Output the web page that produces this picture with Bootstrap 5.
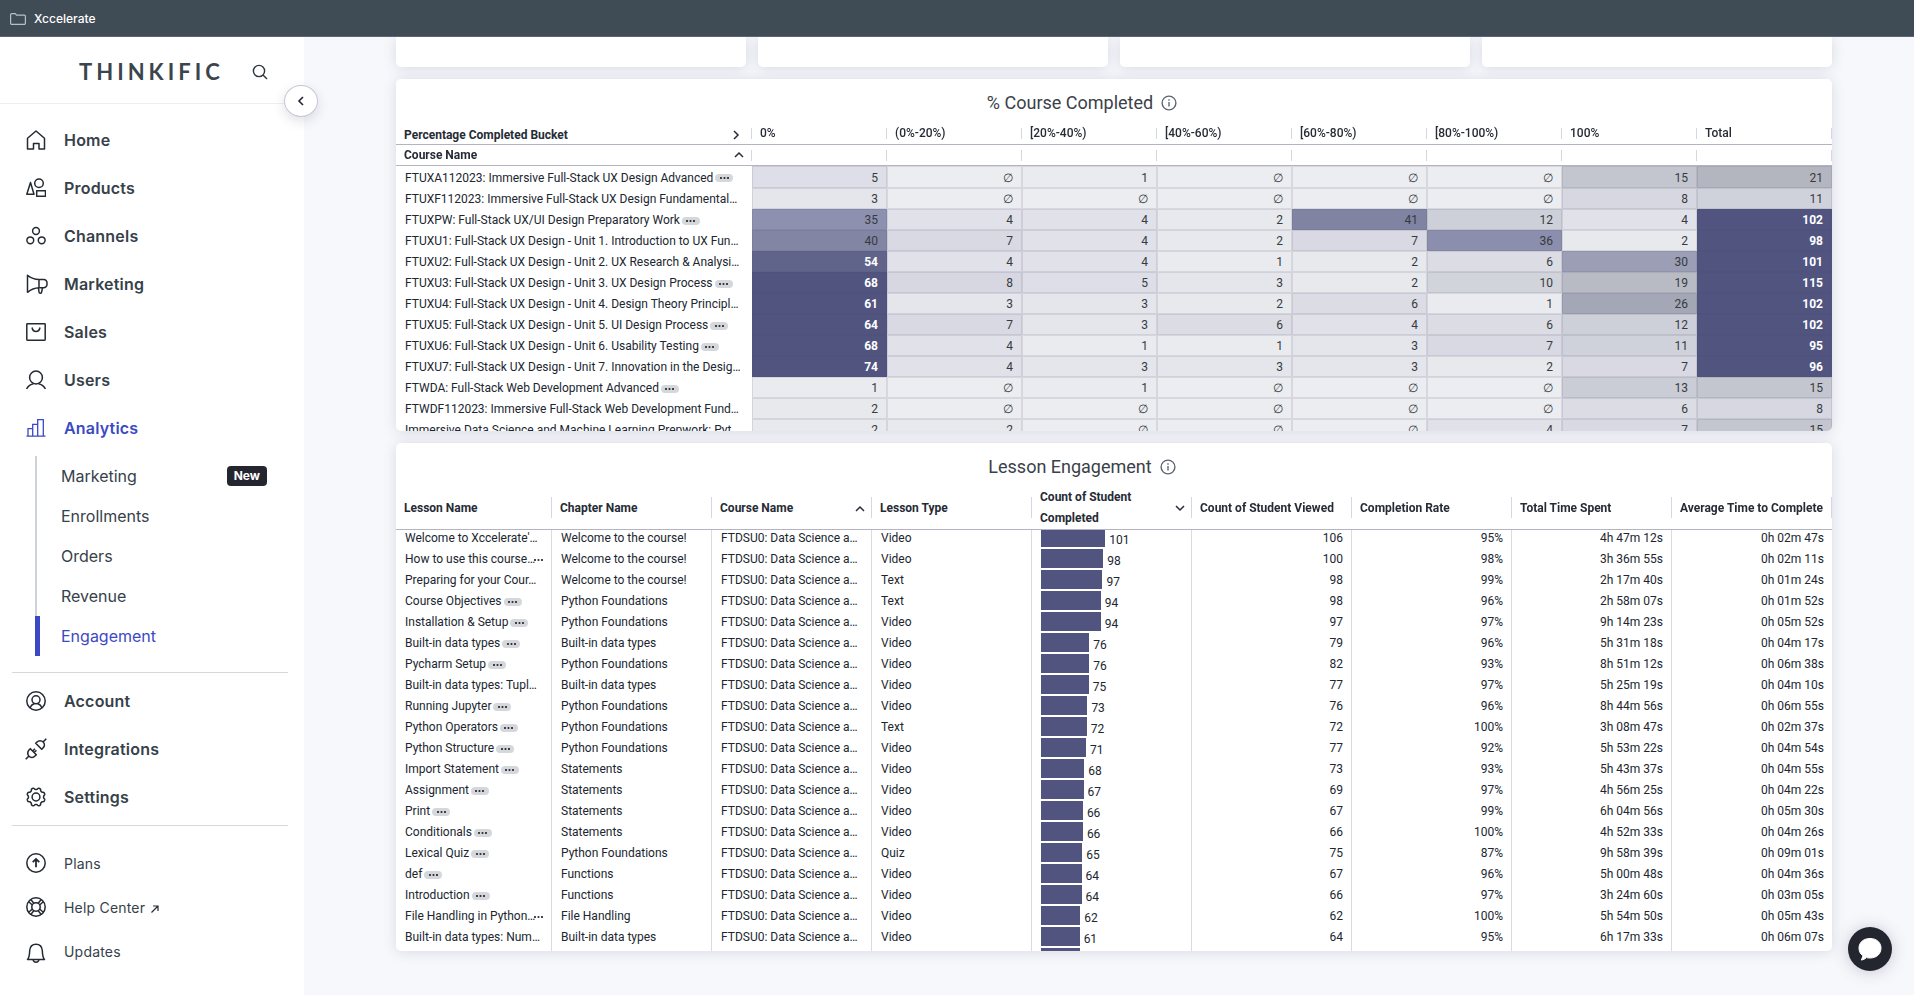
<!DOCTYPE html>
<html lang="en">
<head>
<meta charset="utf-8">
<meta name="viewport" content="width=device-width, initial-scale=1">
<title>Engagement analytics</title>
<link href="https://cdn.jsdelivr.net/npm/bootstrap@5.3.0/dist/css/bootstrap.min.css" rel="stylesheet">
<style>
  body { font-family: Inter, "Liberation Sans", sans-serif; background: #f7f8fb; color: #36414a; height: 100vh; overflow: hidden; }
  a { color: inherit; text-decoration: none; }
  svg { display: block; fill: none; stroke: currentColor; flex: none; }

  .bookmarks { height: 37px; background: #404c55; border-bottom: 1px solid #5c6670; color: #fff; font: 500 12px/16px Inter, sans-serif; padding: 1px 10px 0; gap: 8px; }
  .bookmarks svg { color: #b9bfc4; }

  .side { width: 304px; background: #fff; position: relative; flex: none; }
  .brand-row { height: 67px; border-bottom: 1px solid #eeeff2; padding: 4px 36px 0 79px; }
  .brand-name { font: 700 22px/24px Lato, sans-serif; letter-spacing: 4px; color: #3b454d; }
  .icon-btn { border: 0; background: none; padding: 0; color: #2b343c; }
  .collapse-btn { position: absolute; right: -14px; top: 48px; width: 34px; height: 32px; border-radius: 50%; border: 1px solid #c6c6d4; background: #fff; color: #1f2430; box-shadow: 0 4px 12px rgba(60,64,110,.16); z-index: 2; }
  .main-menu { padding-top: 12px; }
  .menu-link { height: 48px; padding-left: 26px; gap: 18px; font-weight: 600; font-size: 16px; letter-spacing: .2px; }
  .menu-link svg { color: #242a33; }
  .menu-link.current, .menu-link.current svg { color: #3c49c4; }
  .sub-menu { margin: 4px 37px 16px 35px; }
  .sub-link { height: 40px; padding-left: 24px; border-left: 2px solid #cdd2d6; font-size: 16px; }
  .sub-link.current { color: #3c49c4; border-left: 5px solid #3c49c4; padding-left: 21px; }
  .new-tag { background: #23262f; color: #fff; font: 700 12px/20px Inter, sans-serif; padding: 0 7px; border-radius: 4px; }
  .rule { height: 1px; background: #d6d9dc; margin: 0 16px 4px 12px; }
  .foot-menu { padding-top: 11px; }
  .foot-link { height: 44px; padding-left: 26px; gap: 18px; font-size: 14px; letter-spacing: .2px; }
  .foot-link svg { color: #242a33; }
  .out-arrow { margin: 4px 0 0 6px; }

  .board { padding: 0 82px 0 92px; font-family: Roboto, sans-serif; min-width: 0; gap: 12px; }
  .stat-row { gap: 12px; }
  .tile { background: #fff; border-radius: 5px; box-shadow: 0 1px 13px rgba(70,72,120,.17); overflow: hidden; }
  .stat { height: 30px; border-radius: 0 0 5px 5px; }
  .completed { height: 352px; }
  .lessons { height: 508px; }
  .tile-title { height: 43px; padding: 5px 64px 0 0; gap: 8px; font-size: 18px; line-height: 24px; font-weight: 400; color: #3a4149; margin: 0; }
  .tile-title svg { color: #5c6370; }
  .pane { overflow: auto; scrollbar-width: none; flex: 1; min-height: 0; }
  .pane::-webkit-scrollbar { display: none; }

  .grid { width: 100%; table-layout: fixed; border-collapse: separate; border-spacing: 0; font-size: 12px; line-height: 21px; color: #20262f; }
  .grid th { font-weight: 500; color: #262b36; padding: 0; white-space: nowrap; }
  .grid thead { position: sticky; top: 0; z-index: 1; background: #fff; }
  .grid thead th { border-bottom: 1px solid #b3b3c2; }
  .grid td { padding: 2px 9px 0; height: 21px; line-height: 19px; white-space: nowrap; overflow: hidden; }
  .head-cell { display: flex; align-items: center; justify-content: space-between; padding: 0 8px; border-right: 1px solid #d6d6e2; }
  .strong-head { font-weight: 700; }

  .heat th:first-child, .heat td:first-child { width: 356px; }
  .heat .row-a th { height: 23px; }
  .heat .row-b th { height: 21px; }
  .heat .head-cell { height: 11px; }
  .heat .row-a th:first-child .head-cell { padding: 4px 11px 0 8px; }
  .heat .row-b th:first-child .head-cell { padding: 0 7px 0 8px; }
  .heat td + td { text-align: right; border: 1px solid rgba(75,75,105,.13); padding: 2px 8px 0; line-height: 17px; color: #353b41; }
  .heat tbody tr:first-child td { height: 22px; }
  .heat td.hot { color: #fff; font-weight: 700; }

  .log th:first-child { width: 156px; }
  .log thead th { height: 44px; }
  .log .head-cell { height: 21px; padding: 2px 6px 0 8px; }
  .log .head-cell.two-line { padding-top: 0; }
  .log td { border-right: 1px solid #dadbe0; }
  .log td:last-child { border-right: 0; padding-right: 8px; }
  .log td.num { text-align: right; padding-right: 8px; }
  .log td.meter { padding: 0 9px; }
  .meter-row { display: flex; gap: 4px; height: 21px; padding: 1px 0; }
  .meter-fill { background: #50547f; }
  .meter-row span { line-height: 25px; height: 19px; }

  .more { display: inline-flex; align-items: center; justify-content: center; width: 18px; height: 8px; border-radius: 4px; background: #d6d7db; margin-left: 2px; vertical-align: middle; }
  .more.bare { background: none; width: 10px; margin-left: -2px; }

  .chat-btn { position: fixed; right: 22px; bottom: 24px; width: 44px; height: 44px; border: 0; border-radius: 50%; background: #23262f; color: #fff; box-shadow: 0 1px 16px rgba(60,64,110,.26); z-index: 3; }
</style>
</head>
<body class="d-flex flex-column">
<header class="bookmarks d-flex align-items-center flex-shrink-0">
  <svg width="16" height="12" viewBox="0 0 16 12" stroke-width="1.2"><path d="M.6 10V1.8A1.2 1.2 0 0 1 1.800.6H5.200L6.600 2.100H14.200A1.200 1.200 0 0 1 15.400 3.300V10A1.300 1.300 0 0 1 14.100 11.400H1.900A1.300 1.300 0 0 1 .6 10Z"/></svg>
  <a href="#">Xccelerate</a>
</header>

<div class="d-flex flex-grow-1 overflow-hidden">
  <nav class="side" aria-label="Main">
    <div class="brand-row d-flex align-items-center justify-content-between">
      <a href="#" class="brand-name">THINKIFIC</a>
      <button class="icon-btn" type="button" aria-label="Search"><svg width="16" height="16" viewBox="0 0 16 16" stroke-width="1.4"><circle cx="7" cy="7" r="5.600"/><path d="M11 11l4 4"/></svg></button>
    </div>
    <button class="collapse-btn d-flex align-items-center justify-content-center p-0" type="button" aria-label="Collapse menu"><svg width="8" height="10" viewBox="0 0 8 10" stroke-width="1.600"><path d="M6 1L2 5l4 4"/></svg></button>

    <div class="main-menu">
      <a class="menu-link d-flex align-items-center" href="#"><svg width="20" height="20" viewBox="0 0 20 20" stroke-width="1.500" stroke-linejoin="round"><path d="M1.500 8.200L10 1l8.500 7.200V19H13v-5.500H7.500V19h-6z"/></svg>Home</a>
      <a class="menu-link d-flex align-items-center" href="#"><svg width="20" height="20" viewBox="0 0 20 20" stroke-width="1.500" stroke-linejoin="round"><path d="M4.500 4.500L8 16.200H.800z"/><circle cx="13" cy="5.300" r="4.300"/><path d="M10.700 12.700h8.800v5.600h-8.800z"/></svg>Products</a>
      <a class="menu-link d-flex align-items-center" href="#"><svg width="20" height="20" viewBox="0 0 20 20" stroke-width="1.500"><circle cx="10" cy="5" r="3.400"/><circle cx="4.300" cy="14.300" r="3.400"/><circle cx="15.700" cy="14.300" r="3.400"/></svg>Channels</a>
      <a class="menu-link d-flex align-items-center" href="#"><svg class="overflow-visible" width="20" height="20" viewBox="0 0 20 20" stroke-width="1.500" stroke-linejoin="round"><path d="M1.500 1.300v17C5 15.500 8.500 14 13 13.800V5.500C8.500 5.300 5 4 1.500 1.300zM13 5.500h4.500a3.300 3.300 0 0 1 3.500 3.700v1a3.500 3.500 0 0 1-3.500 3.600H13M12.500 14l.5 4a1.300 1.300 0 0 0 2.600 0l1-4.300"/></svg>Marketing</a>
      <a class="menu-link d-flex align-items-center" href="#"><svg width="20" height="20" viewBox="0 0 20 20" stroke-width="1.500" stroke-linejoin="round"><rect x=".8" y="1.800" width="18.400" height="16.400" rx=".6"/><path d="M6 5.500c.5 2.600 2 4 4 4s3.500-1.400 4-4"/></svg>Sales</a>
      <a class="menu-link d-flex align-items-center" href="#"><svg width="20" height="20" viewBox="0 0 20 20" stroke-width="1.500"><circle cx="10" cy="7.500" r="6.400"/><path d="M.6 19c1.800-3.300 4.500-4.800 7-5.200M19.400 19c-1.800-3.300-4.500-4.800-7-5.200"/></svg>Users</a>
      <a class="menu-link current d-flex align-items-center" href="#"><svg width="20" height="20" viewBox="0 0 20 20" stroke-width="1.300"><path d="M.5 18.200h19M2 18v-7.300h4.700M6.700 18V6.300h5M11.700 18V1.700h5.600V18"/></svg>Analytics</a>
    </div>
    <div class="sub-menu d-flex flex-column">
      <a class="sub-link d-flex align-items-center justify-content-between" href="#">Marketing <span class="new-tag">New</span></a>
      <a class="sub-link d-flex align-items-center" href="#">Enrollments</a>
      <a class="sub-link d-flex align-items-center" href="#">Orders</a>
      <a class="sub-link d-flex align-items-center" href="#">Revenue</a>
      <a class="sub-link current d-flex align-items-center" href="#">Engagement</a>
    </div>
    <div class="rule"></div>
    <a class="menu-link d-flex align-items-center" href="#"><svg width="20" height="20" viewBox="0 0 20 20" stroke-width="1.500"><circle cx="10" cy="10" r="9.200"/><circle cx="10" cy="8.800" r="4"/><path d="M4 16.800c1-2.500 2.800-3.700 4.500-4.300M16 16.800c-1-2.500-2.800-3.700-4.500-4.300"/></svg>Account</a>
    <a class="menu-link d-flex align-items-center" href="#"><svg class="overflow-visible" width="20" height="20" viewBox="0 0 20 20" stroke-width="1.600" stroke-linejoin="round"><path d="M-.3 20.300l3-3M17.300 2.700l3-3M4.300 9.700l6 6-1.300 1.300c-1.700 1.700-4.300 1.900-6 .2s-1.700-4.500 0-6.200zM9.700 4.300l6 6L17 9c1.700-1.700 1.900-4.300.2-6s-4.500-1.700-6.200 0zM6.700 12l2.200-2.200M8.200 13.500l2.200-2.200"/></svg>Integrations</a>
    <a class="menu-link d-flex align-items-center" href="#"><svg width="20" height="20" viewBox="0 0 20 20" stroke-width="1.500" stroke-linejoin="round"><circle cx="10" cy="10" r="3.900"/><path id="gear"/></svg>Settings</a>
    <div class="rule mt-1"></div>
    <div class="foot-menu">
      <a class="foot-link d-flex align-items-center" href="#"><svg width="20" height="20" viewBox="0 0 20 20" stroke-width="1.500"><circle cx="10" cy="10" r="9.200"/><path d="M10 14.200V6M6.700 9.200L10 6l3.300 3.200" stroke-width="1.800"/></svg>Plans</a>
      <a class="foot-link d-flex align-items-center" href="#"><svg width="20" height="20" viewBox="0 0 20 20" stroke-width="1.500"><circle cx="10" cy="10" r="9.200"/><circle cx="10" cy="10" r="4.200"/><path d="M4.800 2.500L8 6.400M2.700 4.800L6.400 8M15.200 2.500L12 6.400M17.300 4.800L13.600 8M4.800 17.500L8 13.600M2.700 15.200L6.400 12M15.200 17.500L12 13.600M17.300 15.200L13.600 12"/></svg><span class="d-flex align-items-center">Help Center<svg class="out-arrow" width="8" height="8" viewBox="0 0 8 8" stroke-width="1.200"><path d="M.5 7.500L7 1M2 1h5v5"/></svg></span></a>
      <a class="foot-link d-flex align-items-center" href="#"><svg class="mt-1" width="20" height="20" viewBox="0 0 20 20" stroke-width="1.500" stroke-linejoin="round"><path d="M1.500 16.500C3.500 14.500 3.500 11 3.700 7.500 4 3.500 6.500 1.200 10 1.200s6 2.300 6.300 6.300c.2 3.500.2 7 2.200 9zM7 16.700c.3 1.700 1.500 2.500 3 2.500s2.700-.8 3-2.500"/></svg>Updates</a>
    </div>
  </nav>

  <main class="board flex-grow-1 d-flex flex-column">
    <div class="stat-row d-flex flex-shrink-0">
      <div class="tile stat flex-fill"></div>
      <div class="tile stat flex-fill"></div>
      <div class="tile stat flex-fill"></div>
      <div class="tile stat flex-fill"></div>
    </div>

    <section class="tile completed d-flex flex-column flex-shrink-0">
      <h2 class="tile-title d-flex align-items-center justify-content-center flex-shrink-0"><span>% Course Completed</span><svg width="16" height="16" viewBox="0 0 16 16" stroke-width="1.400"><circle cx="8" cy="8" r="6.900"/><path d="M8 7v4.500M8 4.200v1.500"/></svg></h2>
      <div class="pane">
        <table class="grid heat">
          <thead>
            <tr class="row-a" id="buckets"><th scope="col"><div class="head-cell strong-head"><span>Percentage Completed Bucket</span><svg width="8" height="10" viewBox="0 0 8 10" stroke-width="1.500"><path d="M2 1l4 4-4 4"/></svg></div></th></tr>
            <tr class="row-b" id="names"><th scope="col"><div class="head-cell strong-head"><span>Course Name</span><svg width="10" height="8" viewBox="0 0 10 8" stroke-width="1.500"><path d="M1 6l4-4 4 4"/></svg></div></th></tr>
          </thead>
          <tbody id="heatBody"></tbody>
        </table>
      </div>
    </section>

    <section class="tile lessons d-flex flex-column flex-shrink-0">
      <h2 class="tile-title d-flex align-items-center justify-content-center flex-shrink-0"><span>Lesson Engagement</span><svg width="16" height="16" viewBox="0 0 16 16" stroke-width="1.400"><circle cx="8" cy="8" r="6.900"/><path d="M8 7v4.500M8 4.200v1.500"/></svg></h2>
      <div class="pane" id="lessonPane">
        <table class="grid log">
          <thead><tr>
            <th scope="col"><div class="head-cell strong-head">Lesson Name</div></th>
            <th scope="col"><div class="head-cell strong-head">Chapter Name</div></th>
            <th scope="col"><div class="head-cell strong-head"><span>Course Name</span><svg width="10" height="8" viewBox="0 0 10 8" stroke-width="1.500"><path d="M1 6l4-4 4 4"/></svg></div></th>
            <th scope="col"><div class="head-cell strong-head">Lesson Type</div></th>
            <th scope="col"><div class="head-cell two-line strong-head"><span>Count of Student<br>Completed</span><svg width="10" height="8" viewBox="0 0 10 8" stroke-width="1.500"><path d="M1 2l4 4 4-4"/></svg></div></th>
            <th scope="col"><div class="head-cell strong-head">Count of Student Viewed</div></th>
            <th scope="col"><div class="head-cell strong-head">Completion Rate</div></th>
            <th scope="col"><div class="head-cell strong-head">Total Time Spent</div></th>
            <th scope="col"><div class="head-cell strong-head">Average Time to Complete</div></th>
          </tr></thead>
          <tbody id="lessonBody"></tbody>
        </table>
      </div>
    </section>
  </main>
</div>

<button class="chat-btn d-flex align-items-center justify-content-center p-0" type="button" aria-label="Open chat"><svg width="24" height="24" viewBox="0 0 24 24" stroke="none"><path fill="#fff" d="M12 1.500c6.500 0 11 4 11 9.500 0 6-4.500 10-11 10-1.300 0-2.500-.1-3.500-.4C7 22 5 22.800 3.200 23c.9-1.300 1.500-2.800 1.500-4.400C2.200 16.800 1 14.300 1 11c0-5.500 4.500-9.500 11-9.500z"/></svg></button>

<script src="https://cdn.jsdelivr.net/npm/bootstrap@5.3.0/dist/js/bootstrap.bundle.min.js"></script>
<script>
  // Settings cog: an outline with eight rounded teeth
  const pts = [];
  for (let i = 0; i < 96; i++) {
    const t = i / 96 * 2 * Math.PI, r = 8.4 + .8 * Math.tanh(2.5 * Math.cos(8 * t + Math.PI));
    pts.push((10 + r * Math.cos(t)).toFixed(2) + ' ' + (10 + r * Math.sin(t)).toFixed(2));
  }
  document.getElementById('gear').setAttribute('d', 'M' + pts.join('L') + 'Z');

  const dots = '<svg width="9" height="2" viewBox="0 0 9 2" stroke="none"><g fill="#3a3f4a"><circle cx="1" cy="1" r=".7"/><circle cx="4.500" cy="1" r=".7"/><circle cx="8" cy="1" r=".7"/></g></svg>';
  // A trailing "+" gives the name a menu pill; "~" leaves only its dots
  const label = s => s.endsWith('+') ? s.slice(0, -1) + '<span class="more">' + dots + '</span>'
    : s.endsWith('~') ? s.slice(0, -1) + '<span class="more bare">' + dots + '</span>' : s;

  const buckets = ['0%', '(0%-20%)', '[20%-40%)', '[40%-60%)', '[60%-80%)', '[80%-100%)', '100%', 'Total'];
  buckets.forEach(b => {
    document.getElementById('buckets').insertAdjacentHTML('beforeend', `<th scope="col"><div class="head-cell">${b}</div></th>`);
    document.getElementById('names').insertAdjacentHTML('beforeend', '<th><div class="head-cell"></div></th>');
  });

  // Heat scale: value and colour stops, blended in between
  const stops = [[0,236,237,240],[2,232,233,237],[4,225,225,234],[7,217,217,227],[12,205,208,216],[15,195,198,207],[21,179,182,191],[26,164,167,181],[30,155,158,181],[35,141,144,174],[41,128,131,161],[54,96,100,138],[60,80,84,127],[999,80,84,127]];
  const heat = v => {
    let i = 1; while (v > stops[i][0]) i++;
    const a = stops[i - 1], b = stops[i], k = (v - a[0]) / (b[0] - a[0]);
    return 'rgb(' + [1, 2, 3].map(n => Math.round(a[n] + (b[n] - a[n]) * k)).join(',') + ')';
  };
  const courses = [
    ['FTUXA112023: Immersive Full-Stack UX Design Advanced+',5,0,1,0,0,0,15,21],
    ['FTUXF112023: Immersive Full-Stack UX Design Fundamental…',3,0,0,0,0,0,8,11],
    ['FTUXPW: Full-Stack UX/UI Design Preparatory Work+',35,4,4,2,41,12,4,102],
    ['FTUXU1: Full-Stack UX Design - Unit 1. Introduction to UX Fun…',40,7,4,2,7,36,2,98],
    ['FTUXU2: Full-Stack UX Design - Unit 2. UX Research &amp; Analysi…',54,4,4,1,2,6,30,101],
    ['FTUXU3: Full-Stack UX Design - Unit 3. UX Design Process+',68,8,5,3,2,10,19,115],
    ['FTUXU4: Full-Stack UX Design - Unit 4. Design Theory Principl…',61,3,3,2,6,1,26,102],
    ['FTUXU5: Full-Stack UX Design - Unit 5. UI Design Process+',64,7,3,6,4,6,12,102],
    ['FTUXU6: Full-Stack UX Design - Unit 6. Usability Testing+',68,4,1,1,3,7,11,95],
    ['FTUXU7: Full-Stack UX Design - Unit 7. Innovation in the Desig…',74,4,3,3,3,2,7,96],
    ['FTWDA: Full-Stack Web Development Advanced+',1,0,1,0,0,0,13,15],
    ['FTWDF112023: Immersive Full-Stack Web Development Fund…',2,0,0,0,0,0,6,8],
    ['Immersive Data Science and Machine Learning Prepwork: Pyt…',2,2,0,0,0,4,7,15]
  ];
  document.getElementById('heatBody').innerHTML = courses.map(([n, ...v]) =>
    `<tr><td>${label(n)}</td>${v.map(x => `<td class="${x > 50 ? 'hot' : ''}" style="background:${heat(x)}">${x || '∅'}</td>`).join('')}</tr>`).join('');

  const PF = 'Python Foundations', WC = 'Welcome to the course!', BT = 'Built-in data types', ST = 'Statements';
  const lessons = [
    ["Welcome to Xccelerate'…",WC,'Video',101,106,95,'4h 47m 12s','0h 02m 47s'],
    ['How to use this course…~',WC,'Video',98,100,98,'3h 36m 55s','0h 02m 11s'],
    ['Preparing for your Cour…',WC,'Text',97,98,99,'2h 17m 40s','0h 01m 24s'],
    ['Course Objectives+',PF,'Text',94,98,96,'2h 58m 07s','0h 01m 52s'],
    ['Installation &amp; Setup+',PF,'Video',94,97,97,'9h 14m 23s','0h 05m 52s'],
    ['Built-in data types+',BT,'Video',76,79,96,'5h 31m 18s','0h 04m 17s'],
    ['Pycharm Setup+',PF,'Video',76,82,93,'8h 51m 12s','0h 06m 38s'],
    ['Built-in data types: Tupl…',BT,'Video',75,77,97,'5h 25m 19s','0h 04m 10s'],
    ['Running Jupyter+',PF,'Video',73,76,96,'8h 44m 56s','0h 06m 55s'],
    ['Python Operators+',PF,'Text',72,72,100,'3h 08m 47s','0h 02m 37s'],
    ['Python Structure+',PF,'Video',71,77,92,'5h 53m 22s','0h 04m 54s'],
    ['Import Statement+',ST,'Video',68,73,93,'5h 43m 37s','0h 04m 55s'],
    ['Assignment+',ST,'Video',67,69,97,'4h 56m 25s','0h 04m 22s'],
    ['Print+',ST,'Video',66,67,99,'6h 04m 56s','0h 05m 30s'],
    ['Conditionals+',ST,'Video',66,66,100,'4h 52m 33s','0h 04m 26s'],
    ['Lexical Quiz+',PF,'Quiz',65,75,87,'9h 58m 39s','0h 09m 01s'],
    ['def+','Functions','Video',64,67,96,'5h 00m 48s','0h 04m 36s'],
    ['Introduction+','Functions','Video',64,66,97,'3h 24m 60s','0h 03m 05s'],
    ['File Handling in Python…~','File Handling','Video',62,62,100,'5h 54m 50s','0h 05m 43s'],
    ['Built-in data types: Num…',BT,'Video',61,64,95,'6h 17m 33s','0h 06m 07s'],
    ['','','',61,'','','','']
  ];
  document.getElementById('lessonBody').innerHTML = lessons.map(([n, c, t, d, v, r, tt, at]) =>
    `<tr><td>${label(n)}</td><td>${c}</td><td>${n && 'FTDSU0: Data Science a…'}</td><td>${t}</td>` +
    `<td class="meter"><div class="meter-row"><div class="meter-fill" style="width:${(d * .45).toFixed(1)}%"></div>${n && `<span>${d}</span>`}</div></td>` +
    `<td class="num">${v}</td><td class="num">${r && r + '%'}</td><td class="num">${tt}</td><td class="num">${at}</td></tr>`).join('');
  document.getElementById('lessonPane').scrollTop = 3;
</script>
</body>
</html>
